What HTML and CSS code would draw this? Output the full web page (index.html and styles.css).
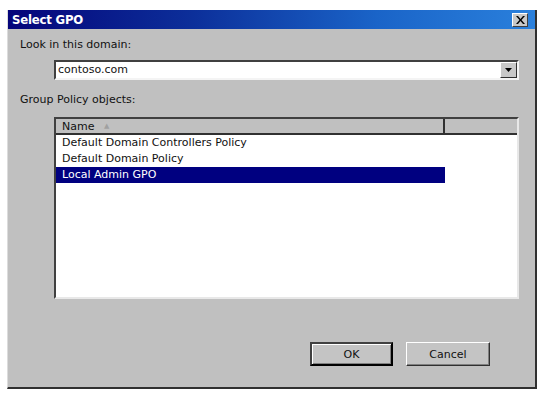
FILE: index.html
```html
<!DOCTYPE html>
<html lang="en">
<head>
    <meta charset="UTF-8">
    <title>Select GPO</title>
    <link rel="stylesheet" href="styles.css">
</head>
<body>
    <div class="dialog">
        <div class="titlebar">
            <span class="title">Select GPO</span>
            <button class="close-btn" aria-label="Close">
                <svg width="9" height="8" viewBox="0 0 9 8">
                    <path d="M0 0h2l2.5 3 2.5-3h2L5.5 4 9 8H7L4.5 5 2 8H0l3.5-4z" fill="#000"/>
                </svg>
            </button>
        </div>
        <div class="content">
            <div class="label first">Look in this domain:</div>
            <div class="combo">
                <span class="combo-value">contoso.com</span>
                <span class="combo-arrow">
                    <svg width="7" height="4" viewBox="0 0 7 4"><path d="M0 0h7L3.5 4z" fill="#000"/></svg>
                </span>
            </div>
            <div class="label second">Group Policy objects:</div>
            <div class="listview">
                <div class="list-header">
                    <div class="col-name">Name <span class="sort">&#9650;</span></div>
                    <div class="col-rest"></div>
                </div>
                <div class="row">Default Domain Controllers Policy</div>
                <div class="row">Default Domain Policy</div>
                <div class="row selected">Local Admin GPO</div>
            </div>
            <div class="actions">
                <button class="btn default">OK</button>
                <button class="btn">Cancel</button>
            </div>
        </div>
    </div>
</body>
</html>
```

FILE: styles.css
```css
* {
    margin: 0;
    padding: 0;
    box-sizing: border-box;
}

body {
    background: #fff;
    font-family: "DejaVu Sans", sans-serif;
    font-size: 11px;
    color: #111;
    padding: 10px 0 0 7px;
}

.dialog {
    width: 530px;
    height: 379px;
    background: #c0c0c0;
    border-left: 1px solid #dcdcdc;
    border-right: 2px solid #303030;
    border-bottom: 2px solid #303030;
    display: flex;
    flex-direction: column;
}

.titlebar {
    height: 19px;
    background: linear-gradient(to right, #05057a, #0c2f9a 35%, #1a64c8 70%, #2a80dc);
    display: flex;
    align-items: center;
    justify-content: space-between;
    padding: 0 7px 0 4px;
}

.title {
    color: #fff;
    font-family: "DejaVu Sans Condensed", "DejaVu Sans", sans-serif;
    font-weight: bold;
    font-size: 13px;
    letter-spacing: -0.2px;
}

.close-btn {
    width: 16px;
    height: 14px;
    background: #c8c8c8;
    border: 1px solid;
    border-color: #fff #404040 #404040 #fff;
    display: flex;
    align-items: center;
    justify-content: center;
}

.content {
    flex: 1;
    padding: 0 16px 0 12px;
    display: flex;
    flex-direction: column;
}

.label {
    line-height: 14px;
}

.label.first {
    margin-top: 9px;
}

.label.second {
    margin-top: 13px;
}

.combo {
    margin: 8px 0 0 34px;
    height: 20px;
    background: #fff;
    border: 2px solid;
    border-color: #404040 #f4f4f4 #f4f4f4 #404040;
    display: flex;
    align-items: center;
    justify-content: space-between;
    padding-left: 2px;
}

.combo-value {
    line-height: 14px;
}

.combo-arrow {
    width: 17px;
    height: 16px;
    background: #c8c8c8;
    border: 1px solid;
    border-color: #fff #303030 #303030 #fff;
    display: flex;
    align-items: center;
    justify-content: center;
}

.listview {
    margin: 10px 0 0 34px;
    height: 182px;
    background: #fff;
    border: 2px solid;
    border-color: #404040 #e8e8e8 #e8e8e8 #404040;
}

.list-header {
    display: flex;
    height: 16px;
    background: #c0c0c0;
    border-bottom: 2px solid #303030;
}

.col-name {
    width: 389px;
    padding-left: 6px;
    line-height: 14px;
    border-right: 2px solid #303030;
}

.sort {
    color: #a0a0a0;
    font-size: 7px;
    margin-left: 6px;
    vertical-align: 2px;
}

.col-rest {
    flex: 1;
}

.row {
    width: 389px;
    height: 16px;
    line-height: 16px;
    padding-left: 6px;
}

.row.selected {
    background: #000080;
    color: #fff;
}

.actions {
    margin-top: 43px;
    display: flex;
    justify-content: flex-end;
    gap: 13px;
    padding-right: 29px;
}

.btn {
    width: 84px;
    height: 24px;
    background: #c4c4c4;
    font-family: inherit;
    font-size: 11px;
    color: #111;
    border: 1px solid;
    border-color: #fff #303030 #303030 #fff;
    box-shadow: inset -1px -1px 0 #808080;
}

.btn.default {
    width: 83px;
    border: 2px solid;
    border-color: #404040 #000 #000 #404040;
    box-shadow: inset 1px 1px 0 #fff, inset -1px -1px 0 #808080;
}
```
